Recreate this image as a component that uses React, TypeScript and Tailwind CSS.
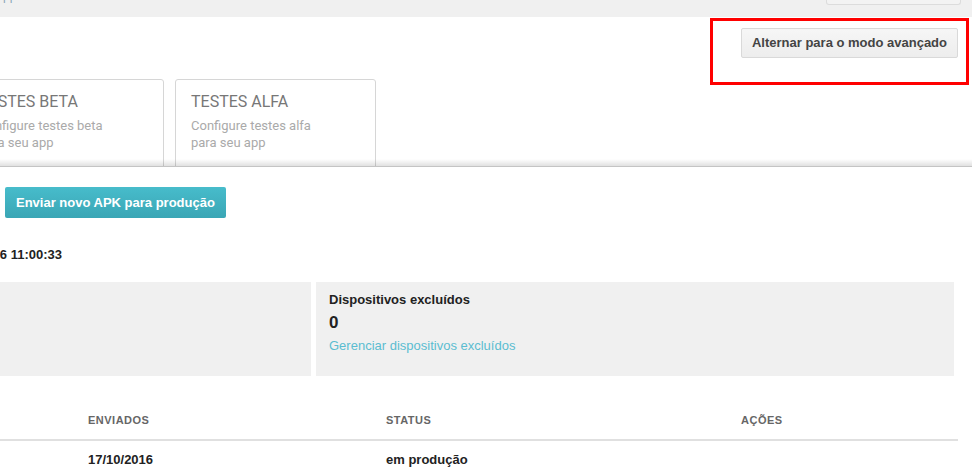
import React from "react";

function TestCard({ title, lines }: { title: string; lines: string[] }) {
  return (
    <div className="w-[201px] h-[110px] shrink-0 border border-[#d6d6d6] rounded-t-[3px] px-[15px] pt-[12px] font-['Roboto',sans-serif]">
      <div className="text-[16px] leading-[20px] text-[#777]">{title}</div>
      <div className="mt-[5px] text-[13px] leading-[17px] text-[#aaa]">
        {lines.map((l) => (
          <div key={l}>{l}</div>
        ))}
      </div>
    </div>
  );
}

export default function App() {
  return (
    <div className="relative w-full h-[467px] overflow-hidden bg-white font-['Liberation_Sans',Arial,sans-serif] text-[#333]">
      {/* top bar */}
      <div className="h-[17px] bg-[#f0f0f0] flex justify-between overflow-hidden">
        <div className="ml-[3px] -mt-[11px] text-[12px] leading-[14px] text-[#8aa4b8]">pp</div>
        <div className="mr-[11px] w-[135px] h-[5px] border border-t-0 border-[#dcdcdc] rounded-b-[3px] bg-[#f3f3f3]" />
      </div>

      {/* mode switch */}
      <div className="flex justify-end pr-[14px] pt-[11px]">
        <button className="h-[30px] px-[10px] border border-[#d9d9d9] rounded-[2px] bg-gradient-to-b from-[#f6f6f6] to-[#ededed] text-[13px] font-bold text-[#444]">
          Alternar para o modo avançado
        </button>
      </div>
      <div className="absolute top-[18px] right-[3px] w-[259px] h-[67px] border-[3px] border-[#ff0000] pointer-events-none" />

      {/* test cards */}
      <div className="relative mt-[21px] h-[88px] overflow-hidden border-b border-[#c4c4c4]">
        <div className="flex gap-[11px] -ml-[37px]">
          <TestCard title="TESTES BETA" lines={["Configure testes beta", "para seu app"]} />
          <TestCard title="TESTES ALFA" lines={["Configure testes alfa", "para seu app"]} />
        </div>
        <div className="absolute left-0 right-0 bottom-0 h-[7px] bg-gradient-to-b from-black/0 to-black/[0.12]" />
      </div>

      {/* upload */}
      <div className="mt-[20px] ml-[5px]">
        <button className="h-[31px] px-[11px] rounded-[2px] bg-gradient-to-b from-[#47bccb] to-[#3aa6b5] text-white text-[13px] font-bold">
          Enviar novo APK para produção
        </button>
      </div>

      <div className="mt-[29px] -ml-[58px] text-[13px] leading-[16px] font-bold text-[#222] whitespace-nowrap">
        17/10/2016 11:00:33
      </div>

      {/* stats panels */}
      <div className="mt-[19px] -ml-[327px] flex gap-[5px]">
        <div className="w-[638px] h-[94px] shrink-0 bg-[#f0f0f0]" />
        <div className="w-[638px] h-[94px] shrink-0 bg-[#f0f0f0] pl-[13px] pt-[10px]">
          <div className="text-[13px] leading-[16px] font-bold text-[#222]">Dispositivos excluídos</div>
          <div className="mt-[5px] text-[17px] leading-[20px] font-bold text-[#222]">0</div>
          <div className="mt-[5px] text-[13px] leading-[16px] text-[#5bbdd0]">Gerenciar dispositivos excluídos</div>
        </div>
      </div>

      {/* table */}
      <div className="mt-[24px] mr-[14px] h-[41px] pt-[2px] border-b-2 border-[#e0e0e0] pl-[88px] grid grid-cols-[298px_355px_1fr] items-center text-[11px] font-bold tracking-[0.5px] text-[#666]">
        <div>ENVIADOS</div>
        <div>STATUS</div>
        <div>AÇÕES</div>
      </div>
      <div className="pl-[88px] pt-[11px] grid grid-cols-[298px_355px_1fr] text-[13px] leading-[16px] font-bold text-[#222]">
        <div>17/10/2016</div>
        <div>em produção</div>
        <div />
      </div>
    </div>
  );
}
